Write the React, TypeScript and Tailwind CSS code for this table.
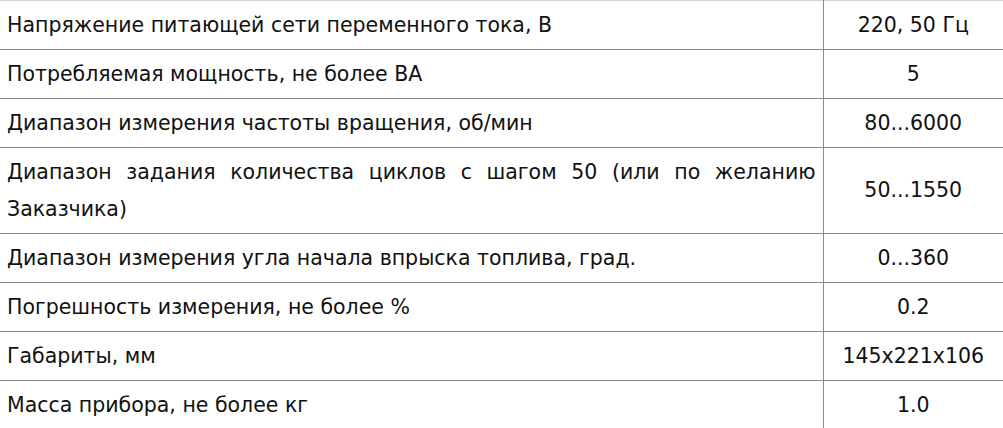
const ROWS = [
  ['Напряжение питающей сети переменного тока, В', '220, 50 Гц'],
  ['Потребляемая мощность, не более ВА', '5'],
  ['Диапазон измерения частоты вращения, об/мин', '80...6000'],
  ['Диапазон задания количества циклов с шагом 50 (или по желанию Заказчика)', '50...1550'],
  ['Диапазон измерения угла начала впрыска топлива, град.', '0...360'],
  ['Погрешность измерения, не более %', '0.2'],
  ['Габариты, мм', '145x221x106'],
  ['Масса прибора, не более кг', '1.0'],
]

export default function App() {
  return (
    <div className="w-[1003px] h-[428px] overflow-hidden bg-white font-['DejaVu_Sans',sans-serif] text-[20.5px] leading-[37px] text-[#111]">
      <table className="w-full border-collapse border-t border-[#d4d4d4]">
        <tbody>
          {ROWS.map(([label, value]) => (
            <tr key={label} className="border-b border-[#8a8a8a]">
              <td className="w-[823px] border-r border-[#8a8a8a] px-[7px] py-[5.5px] text-justify align-middle">
                {label}
              </td>
              <td className="py-[5.5px] text-center align-middle">{value}</td>
            </tr>
          ))}
        </tbody>
      </table>
    </div>
  )
}
